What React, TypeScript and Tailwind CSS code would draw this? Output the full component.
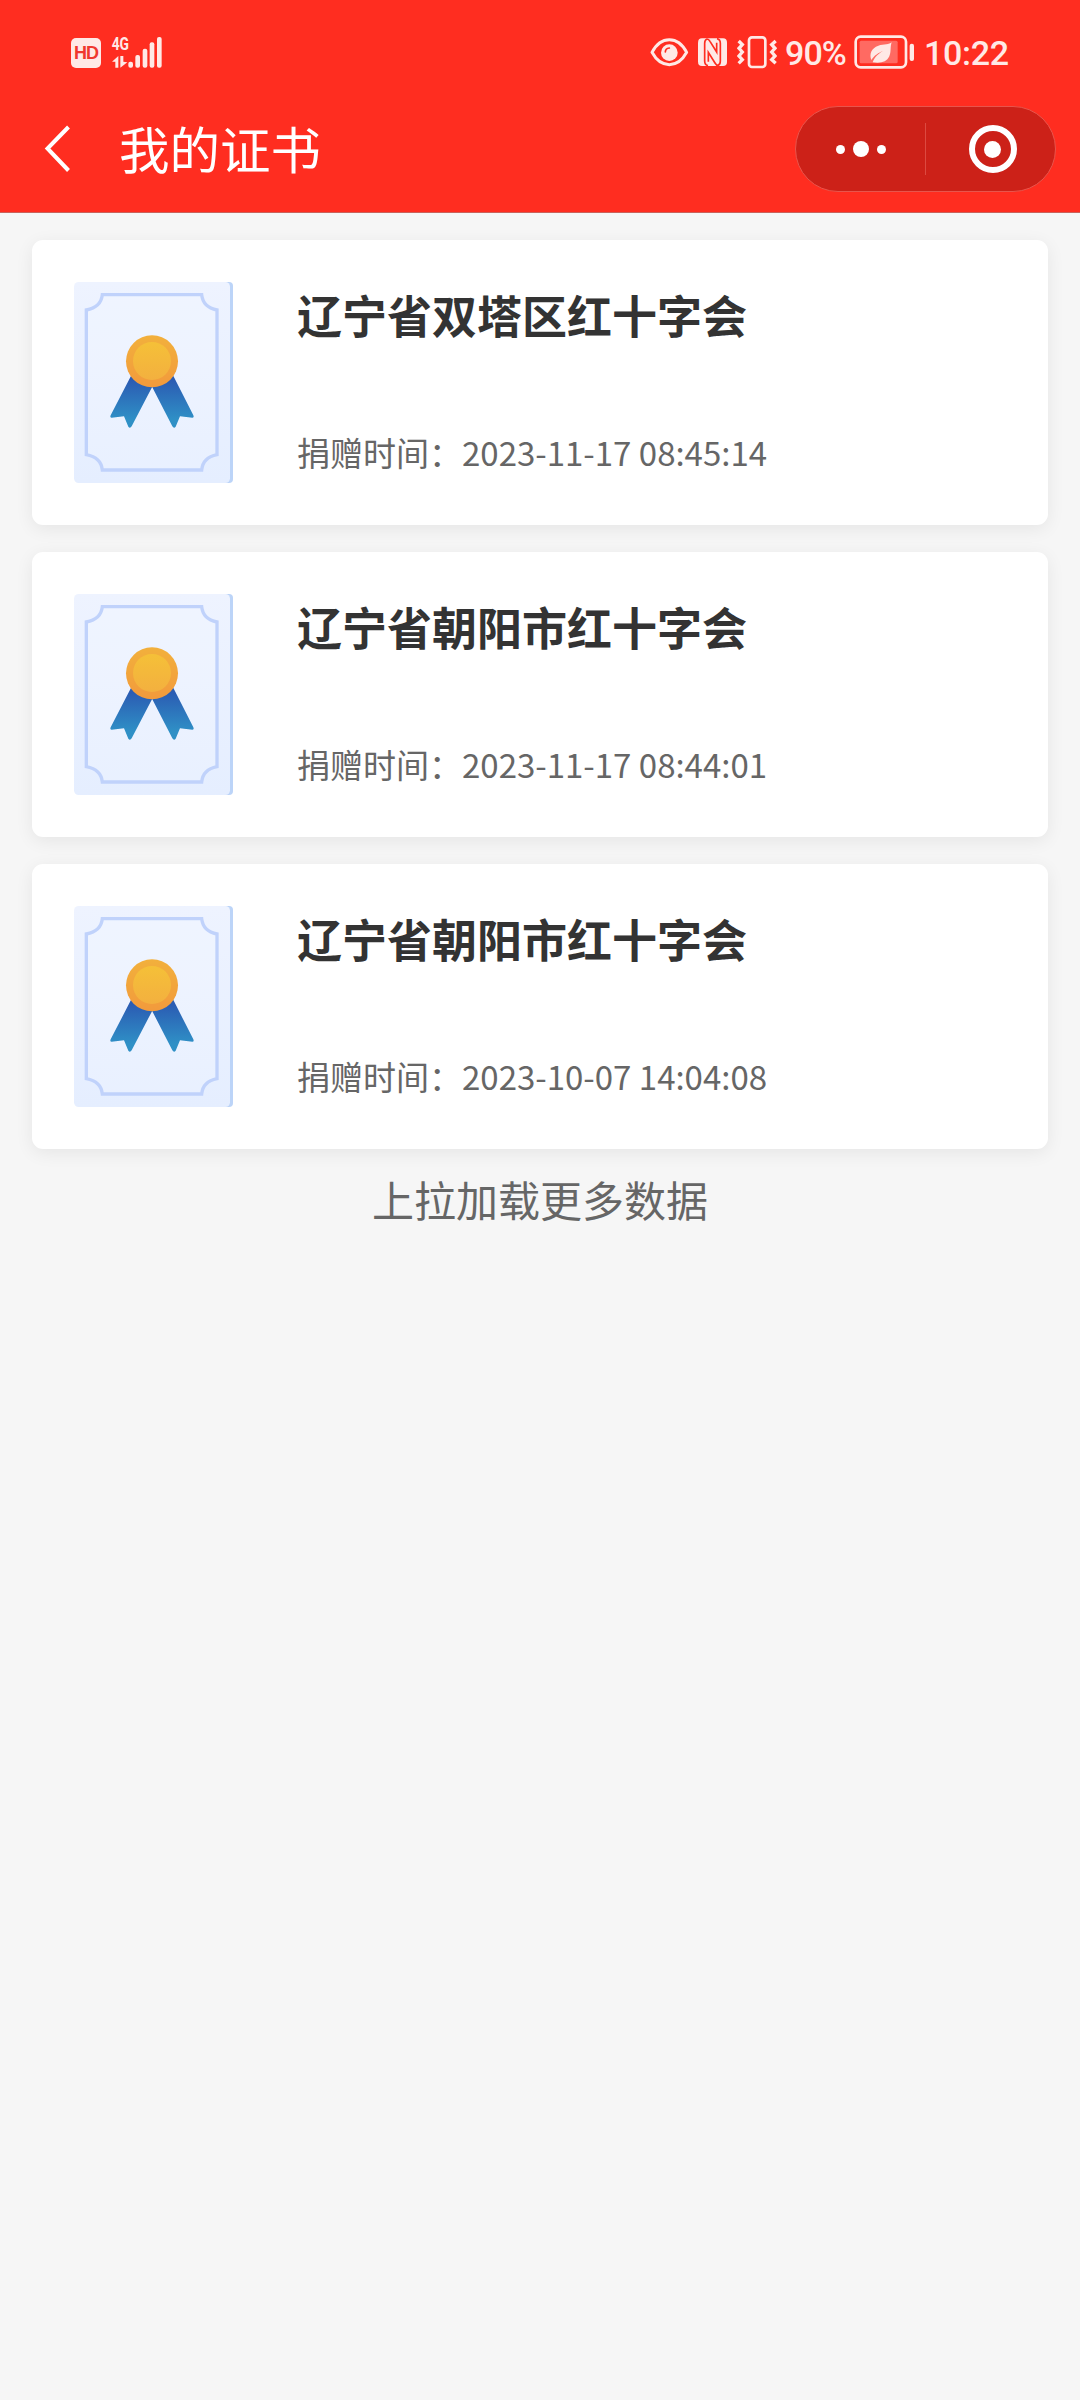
import React from 'react';

type Certificate = {
  id: number;
  org: string;
  time: string;
};

const certificates: Certificate[] = [
  { id: 1, org: '辽宁省双塔区红十字会', time: '2023-11-17 08:45:14' },
  { id: 2, org: '辽宁省朝阳市红十字会', time: '2023-11-17 08:44:01' },
  { id: 3, org: '辽宁省朝阳市红十字会', time: '2023-10-07 14:04:08' },
];

function SignalIcon() {
  return (
    <svg className="w-[52px] h-[52px] ml-[10px] overflow-visible" viewBox="183 17 156 156" fill="#ffe9e6">
      <text x="185" y="89" fontFamily="Roboto, sans-serif" fontWeight="700" fontSize="54" textLength="52" lengthAdjust="spacingAndGlyphs">4G</text>
      <path d="M196 142V124H186L205 107V142Z" />
      <path d="M211 107H220V124L232 126L211 142Z" />
      <rect x="235" y="124" width="14" height="18" rx="6" />
      <rect x="256" y="104" width="14" height="38" rx="6" />
      <rect x="278" y="85" width="14" height="57" rx="6" />
      <rect x="299" y="66" width="14" height="76" rx="6" />
      <rect x="321" y="50" width="14" height="92" rx="6" />
    </svg>
  );
}

function EyeIcon() {
  return (
    <svg className="w-[39px] h-[32px]" viewBox="57 47 117 96" fill="none">
      <path d="M63 96C76 71 94 58 115 58S154 71 167 96C154 120 136 133 115 133S76 120 63 96Z" stroke="#ffe9e6" strokeWidth="9" strokeLinejoin="round" />
      <circle cx="115" cy="97" r="25" fill="#ffe9e6" />
      <path d="M103 95C103 88 107 84 115 83" stroke="#ff2d20" strokeWidth="5" strokeLinecap="round" />
    </svg>
  );
}

function NfcIcon() {
  return (
    <svg className="w-[29px] h-[32px] ml-[9px]" viewBox="204 47 87 96">
      <path d="M216 54H279Q291 54 291 67V124Q291 137 279 137H216Q204 137 204 124V67Q204 54 216 54Z" fill="#ffe9e6" />
      <path d="M234 136Q224 134 224 122V69Q224 58 231 56Q236 56 240 63L260 95V67" fill="none" stroke="#ff2d20" strokeWidth="5" />
      <path d="M261 55Q271 57 271 69V122Q271 133 264 135Q259 135 255 128L235 96V124" fill="none" stroke="#ff2d20" strokeWidth="5" />
    </svg>
  );
}

function VibrateIcon() {
  return (
    <svg className="w-[40px] h-[34px] ml-[10px]" viewBox="321 44 120 102" fill="none" stroke="#ffe9e6" strokeWidth="10">
      <rect x="357" y="51" width="49" height="89" rx="9" strokeWidth="8" />
      <path d="M326 62L337 73L327 84L337 95L327 107L337 118L326 129" />
      <path d="M437 62L425 73L435 84L425 95L435 107L425 118L437 129" />
    </svg>
  );
}

function BatteryIcon() {
  return (
    <svg className="w-[61px] h-[34px] ml-[6px]" viewBox="44 46 183 102">
      <rect x="49" y="51" width="151" height="92" rx="15" fill="none" stroke="#ffe9e6" strokeWidth="8" />
      <rect x="61" y="63" width="114" height="68" rx="5" fill="#ff6a62" />
      <rect x="211" y="72" width="13" height="52" rx="6" fill="#ffe9e6" />
      <path d="M157 68C150 75 134 73 117 78C96 85 89 103 96 121C104 107 119 99 131 93C119 101 105 112 100 128C124 132 142 127 150 110C156 97 152 82 157 68Z" fill="#ffe9e6" />
    </svg>
  );
}

function StatusBar() {
  return (
    <div className="flex items-center justify-between h-[104px] pl-[71px] pr-[71px] text-[#ffe9e6] font-['Roboto',sans-serif]">
      <div className="flex items-center">
        <div className="flex items-center justify-center w-[30px] h-[30px] mt-[2px] rounded-[5px] bg-[#ffe9e6] text-[#f0382e] text-[18px] leading-none font-bold font-['Liberation_Sans',sans-serif] tracking-[-1px]">
          HD
        </div>
        <SignalIcon />
      </div>
      <div className="flex items-center">
        <EyeIcon />
        <NfcIcon />
        <VibrateIcon />
        <span className="w-[63px] ml-[8px] pt-[2px] text-[34px] leading-none font-medium whitespace-nowrap tracking-[-0.9px]">90%</span>
        <BatteryIcon />
        <span className="w-[85px] ml-[9px] pt-[2px] text-[34px] leading-none font-medium whitespace-nowrap tracking-[-0.3px]">10:22</span>
      </div>
    </div>
  );
}

function NavBar() {
  return (
    <div className="flex items-center h-[90px] pl-[44px] pr-[24px]">
      <svg className="w-[28px] h-[50px]" viewBox="0 0 28 50" fill="none" stroke="#fff" strokeWidth="4">
        <path d="M24.5 3L3.5 24.5L24.5 46.5" />
      </svg>
      <h1 className="ml-[47px] pb-[3px] text-[50.5px] leading-none text-white">我的证书</h1>
      <div className="flex items-center w-[261px] h-[86px] ml-auto rounded-full border-[1.5px] border-[#e8554c] bg-[#cc2118]">
        <button type="button" className="flex flex-1 items-center justify-center gap-[8px]">
          <span className="w-[9px] h-[9px] rounded-full bg-white" />
          <span className="w-[16px] h-[16px] rounded-full bg-white" />
          <span className="w-[9px] h-[9px] rounded-full bg-white" />
        </button>
        <div className="w-px h-[52px] bg-[#dc4a41]" />
        <button type="button" className="flex w-[129px] items-center justify-center pl-[4px]">
          <span className="flex items-center justify-center w-[48px] h-[48px] rounded-full border-[6px] border-white">
            <span className="w-[17px] h-[17px] rounded-full bg-white" />
          </span>
        </button>
      </div>
    </div>
  );
}

function CertificateIcon() {
  return (
    <svg className="w-[159px] h-[201px] shrink-0" viewBox="0 0 477 603" fill="none">
      <defs>
        <linearGradient id="paper" x1="0" y1="0" x2="0" y2="1">
          <stop offset="0" stopColor="#eef3ff" />
          <stop offset="1" stopColor="#e5eeff" />
        </linearGradient>
        <linearGradient id="ribbon" x1="0" y1="0" x2="0" y2="1">
          <stop offset="0.1" stopColor="#2b5cb3" />
          <stop offset="0.85" stopColor="#2f90c6" />
        </linearGradient>
        <linearGradient id="rim" x1="0" y1="0" x2="0" y2="1">
          <stop offset="0" stopColor="#f2b03c" />
          <stop offset="1" stopColor="#f29a3c" />
        </linearGradient>
        <linearGradient id="medal" x1="0" y1="0" x2="0" y2="1">
          <stop offset="0" stopColor="#f5c038" />
          <stop offset="1" stopColor="#f3b03f" />
        </linearGradient>
      </defs>
      <rect x="20" y="0" width="457" height="603" rx="12" fill="#bcd4f8" />
      <rect x="0" y="0" width="468" height="603" rx="14" fill="url(#paper)" />
      <path d="M85 38H383Q387 76 429 84V518Q387 526 383 564H85Q81 526 37 518V84Q81 76 85 38Z" fill="#fff" fillOpacity="0.15" stroke="#c0d2fb" strokeWidth="10" />
      <path d="M172 280L236 312L173 433Q168 441 163 434L150 403L113 407Q107 407 110 400Z" fill="url(#ribbon)" />
      <path d="M297 280L233 312L295 433Q300 441 305 434L318 403L355 407Q361 407 358 400Z" fill="url(#ribbon)" />
      <circle cx="234" cy="238" r="78" fill="url(#rim)" />
      <circle cx="234" cy="237" r="57" fill="url(#medal)" />
    </svg>
  );
}

function CertificateCard({ item }: { item: Certificate }) {
  return (
    <div className="flex items-center h-[285px] pl-[42px] rounded-[11px] bg-white shadow-[0_4px_18px_rgba(0,0,0,0.07)]">
      <CertificateIcon />
      <div className="flex flex-col justify-between h-[188px] pb-[3px] ml-[64px]">
        <h2 className="text-[45px] leading-[52px] font-bold text-[#333333]">{item.org}</h2>
        <p className="text-[33px] leading-[44px] text-[#666666] whitespace-nowrap">捐赠时间：{item.time}</p>
      </div>
    </div>
  );
}

export default function App() {
  return (
    <div className="w-[1080px] min-h-[2400px] bg-[#f6f6f6] font-['Noto_Sans_CJK_SC',sans-serif]">
      <header className="h-[213px] bg-[#ff2d20] border-b border-[#c8635c]">
        <StatusBar />
        <NavBar />
      </header>
      <main className="px-[32px] pt-[27px]">
        <div className="flex flex-col gap-[27px]">
          {certificates.map((item) => (
            <CertificateCard key={item.id} item={item} />
          ))}
        </div>
        <p className="mt-[20px] text-center text-[42px] leading-[60px] text-[#666666]">上拉加载更多数据</p>
      </main>
    </div>
  );
}
